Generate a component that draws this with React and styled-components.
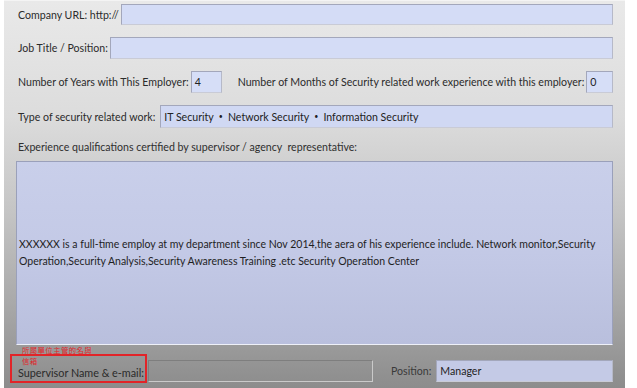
import React from 'react';
import styled, { createGlobalStyle } from 'styled-components';

const GlobalStyle = createGlobalStyle`
  html, body {
    margin: 0;
    padding: 0;
    background: #ffffff;
  }
  body {
    font-family: Lato, "Open Sans", "Noto Sans CJK TC", sans-serif;
  }
`;

const Page = styled.div`
  width: 637px;
  height: 388px;
  overflow: hidden;
  background: #ffffff;
`;

const Panel = styled.div`
  margin-left: 4px;
  width: 621px;
  height: 388px;
  box-sizing: border-box;
  padding: 3px 12px 0 14px;
  display: flex;
  flex-direction: column;
  background: linear-gradient(to bottom, #e9e9e9 0%, #dcdcdc 30%, #c4c4c4 55%, #a9a9a9 78%, #8c8c8c 100%);
  border-top: 1px solid #f4f4f4;
  color: #2b2b2b;
  font-size: 10.6px;
`;

const Row = styled.div`
  display: flex;
  flex-shrink: 0;
  align-items: center;
  height: ${p => p.$h ?? 21}px;
  margin-bottom: ${p => p.$gap ?? 12}px;
`;

const Label = styled.span`
  white-space: nowrap;
  padding-left: ${p => p.$pl ?? 0}px;
  margin-right: ${p => p.$mr ?? 2}px;
`;

const Field = styled.div`
  flex: ${p => p.$w ? 'none' : 1};
  width: ${p => p.$w ? p.$w + 'px' : 'auto'};
  height: 100%;
  box-sizing: border-box;
  display: flex;
  align-items: center;
  padding-left: 3px;
  background: ${p => p.$tone || '#d4dcf6'};
  border: 1px solid #a3a7bb;
  border-bottom-color: #c9cbd6;
  border-right-color: #b6b9c8;
  white-space: nowrap;
  color: #222;
`;

const Sep = styled.span`
  margin: 0 5px;
  font-size: 7px;
  position: relative;
  top: -1px;
`;

const Heading = styled.div`
  flex-shrink: 0;
  padding-left: 0;
  height: 14px;
  line-height: 14px;
  margin-top: 12px;
  margin-bottom: 7px;
  color: #2f2f2f;
`;

const TextBox = styled.div`
  flex-shrink: 0;
  margin-left: -2px;
  height: 184px;
  box-sizing: border-box;
  display: flex;
  align-items: flex-end;
  padding: 0 3px 74px 2px;
  background: linear-gradient(to bottom, #c9cfea 0%, #c3c9e6 50%, #b9bfdd 100%);
  border: 1px solid #9aa0ba;
  border-bottom: 1px solid #eef0f8;
  font-size: 10.5px;
  line-height: 17px;
  color: #1f1f1f;
`;

const Note = styled.div`
  flex-shrink: 0;
  font-family: "Noto Sans CJK TC", sans-serif;
  font-size: 7.4px;
  line-height: 9px;
  height: 9px;
  color: #e0262a;
  padding-left: ${p => p.$pl ?? 4}px;
  white-space: nowrap;
  letter-spacing: 0.4px;
`;

const BottomRow = styled.div`
  display: flex;
  flex-shrink: 0;
  align-items: flex-end;
  margin-left: -8px;
`;

const AnnotBox = styled.div`
  width: 137px;
  height: 29px;
  box-sizing: border-box;
  border: 2px solid #e22428;
  display: flex;
  flex-direction: column;
  padding-left: 6px;
  font-size: 10.8px;
  color: #2a2a2a;
`;

const SupLabel = styled.span`
  white-space: nowrap;
  line-height: 15px;
`;

const BlankField = styled.div`
  width: 225px;
  height: 22px;
  box-sizing: border-box;
  margin-left: 1px;
  margin-bottom: 1px;
  border: 1px solid #cacaca;
  border-top-color: #7e7e7e;
  border-left-color: #7e7e7e;
  background: transparent;
`;

const PosGroup = styled.div`
  flex: 1;
  display: flex;
  align-items: center;
  height: 22px;
  margin-bottom: 1px;
  margin-left: 18px;
`;

const PosLabel = styled.span`
  color: #3a3a3a;
  margin-right: 5px;
`;

export default function App() {
  return (
    <Page>
      <GlobalStyle />
      <Panel>
        <Row $h={21} $gap={12}>
          <Label>Company URL: http://</Label>
          <Field />
        </Row>
        <Row $h={22} $gap={12}>
          <Label>Job Title / Position:</Label>
          <Field />
        </Row>
        <Row $h={22} $gap={12}>
          <Label>Number of Years with This Employer:</Label>
          <Field $w={31} $tone="#d6def7">4</Field>
          <Label $pl={16}>Number of Months of Security related work experience with this employer:</Label>
          <Field $w={27} $tone="#d6def7">0</Field>
        </Row>
        <Row $h={23} $gap={0}>
          <Label $mr={5}>Type of security related work:</Label>
          <Field $tone="#d0d8f3">
            IT Security<Sep>•</Sep>Network Security<Sep>•</Sep>Information Security
          </Field>
        </Row>
        <Heading>Experience qualifications certified by supervisor / agency&nbsp; representative:</Heading>
        <TextBox>
          XXXXXX is a full-time employ at my department since Nov 2014,the aera of his experience include. Network monitor,Security Operation,Security Analysis,Security Awareness Training .etc Security Operation Center
        </TextBox>
        <Note $pl={4}>所屬單位主管的名與</Note>
        <BottomRow>
          <AnnotBox>
            <Note $pl={4}>信箱</Note>
            <SupLabel>Supervisor Name &amp; e-mail:</SupLabel>
          </AnnotBox>
          <BlankField />
          <PosGroup>
            <PosLabel>Position:</PosLabel>
            <Field $tone="#c4cae6">Manager</Field>
          </PosGroup>
        </BottomRow>
      </Panel>
    </Page>
  );
}
